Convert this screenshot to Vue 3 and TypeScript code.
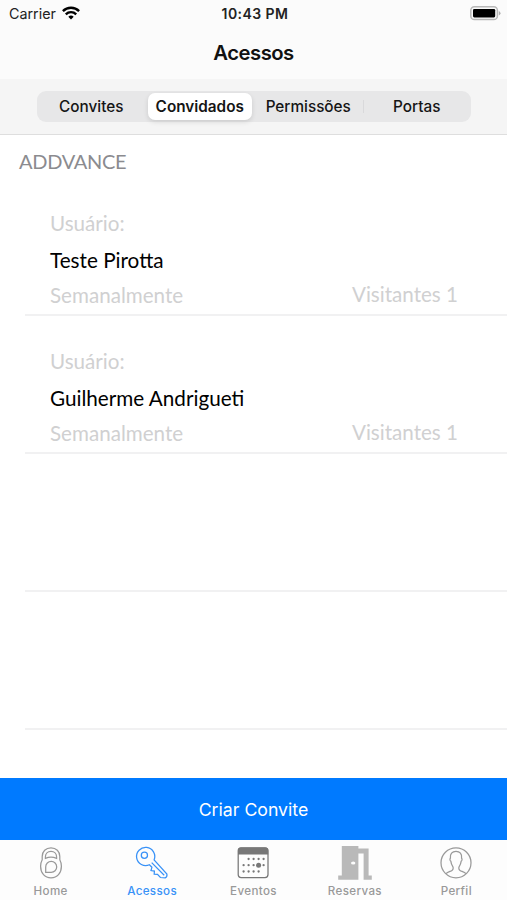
<script setup lang="ts">
import { ref } from 'vue'

interface Guest {
  name: string
  frequency: string
  visitors: number
}

const segments: string[] = ['Convites', 'Convidados', 'Permissões', 'Portas']
const activeSegment = ref(1)
const guests: Guest[] = [
  { name: 'Teste Pirotta', frequency: 'Semanalmente', visitors: 1 },
  { name: 'Guilherme Andrigueti', frequency: 'Semanalmente', visitors: 1 },
]
const tabs: string[] = ['Home', 'Acessos', 'Eventos', 'Reservas', 'Perfil']
const activeTab = ref('Acessos')
const calendarDots: number[][] = [
  [13, 11.5], [18, 11.5], [23, 11.5], [28, 11.5],
  [8, 17.7], [13, 17.7], [18, 17.7], [28, 17.7],
  [8, 24], [13, 24], [18, 24], [23, 24],
]
</script>

<template>
  <div class="screen">
    <header class="nav">
      <div class="status">
        <div class="carrier">
          <span>Carrier</span>
          <svg width="18" height="14" viewBox="0 0 18 14" fill="none" stroke="#000" stroke-width="2.4">
            <path d="M0.9 5.1a11.6 11.6 0 0 1 16.2 0" />
            <path d="M3.8 8.3a7.4 7.4 0 0 1 10.4 0" />
            <path d="M6.3 10.7a3.9 3.9 0 0 1 5.4 0L9 13.4z" fill="#000" stroke="none" />
          </svg>
        </div>
        <span class="clock">10:43 PM</span>
        <svg class="battery" width="31" height="15" viewBox="0 0 31 15">
          <rect x="0.8" y="0.8" width="26.6" height="12.8" rx="3.6" fill="#fafafa" stroke="#b8b8b8" stroke-width="1.5" />
          <rect x="3" y="3" width="22.2" height="8.4" rx="1.3" fill="#000" />
          <path d="M28.8 5v4.6q1.7-.8 1.7-2.3T28.8 5z" fill="#b0b0b0" />
        </svg>
      </div>
      <h1>Acessos</h1>
    </header>
    <div class="filter">
      <div class="segmented">
        <button
          v-for="(label, i) in segments"
          :key="label"
          :class="['segment', { active: i === activeSegment, divided: i === 3 }]"
          @click="activeSegment = i"
        ><span>{{ label }}</span></button>
      </div>
    </div>
    <main>
      <h2>ADDVANCE</h2>
      <ul>
        <li v-for="guest in guests" :key="guest.name">
          <span class="muted">Usuário:</span>
          <span class="name">{{ guest.name }}</span>
          <div class="meta muted">
            <span class="frequency">{{ guest.frequency }}</span>
            <span class="visitors">Visitantes {{ guest.visitors }}</span>
          </div>
        </li>
        <li></li>
        <li></li>
      </ul>
    </main>
    <button class="create">Criar Convite</button>
    <nav class="tabs">
      <button v-for="tab in tabs" :key="tab" :class="['tab', { current: tab === activeTab }]" @click="activeTab = tab">
        <svg width="36" height="36" viewBox="0 0 36 36" fill="none" stroke="currentColor" stroke-width="1.25">
          <g v-if="tab === 'Home'">
            <path d="M18 2.8c-5.2 0-8.8 3.8-8.8 8.7v3.2c-1 1.9-1.6 4-1.6 6.5 0 7 4.2 11.6 10.4 11.6s10.4-4.6 10.4-11.6c0-2.5-.6-4.6-1.6-6.5v-3.2c0-4.9-3.6-8.7-8.8-8.7z" />
            <path d="M12.4 13.4v-1.5c0-3.3 2.3-5.6 5.6-5.6s5.6 2.3 5.6 5.6v1.5q-5.6-2.4-11.2 0z" />
            <path d="M12.7 27.4v-5.5a5.5 5.5 0 1 1 5.5 5.5z" />
          </g>
          <g v-else-if="tab === 'Acessos'">
            <path d="M20.1 14.9a9.1 9.1 0 1 0-4.7 4.9l2.5 2.5-.9 3.2 3.4.6-.2 3 3.3.3 2.9 3.1 4.8.3q2.2-.9 1.7-3.7z" />
            <circle cx="10.4" cy="10.2" r="3.1" />
            <path d="M17.7 17.6l12.5 12.6" />
          </g>
          <g v-else-if="tab === 'Eventos'" class="calendar">
            <rect x="3.2" y="2.8" width="29.8" height="29.8" rx="3" />
            <path d="M3 9.6V5.4q0-2.8 2.8-2.8h24.6q2.8 0 2.8 2.8v4.2z" fill="currentColor" stroke="none" />
            <g fill="currentColor" stroke="none" transform="translate(.6 2.5)">
              <circle v-for="(dot, i) in calendarDots" :key="i" :cx="dot[0]" :cy="dot[1]" r="1.15" />
              <circle cx="23" cy="17.7" r="2.5" />
            </g>
          </g>
          <g v-else-if="tab === 'Reservas'" class="door">
            <path fill-rule="evenodd" d="M4.8 1h16.6v2.6h10.2v27h3.2v4.1h-8.2V8.4h-5.2v26.3H1.2v-4.1h3.6zM18.4 18.1a2.2 1.5 0 1 0-4.4 0 2.2 1.5 0 1 0 4.4 0z" />
          </g>
          <g v-else>
            <circle cx="18" cy="17.8" r="15" />
            <path d="M8 28.7c1.7-1.9 4.5-2.3 6-3.3 1.8-1.2 1.3-3.4.3-4.8-.9-1.2-1.1-2.7-1.4-4.3-1.1-.5-1.2-2.6-.5-3.1-.5-4.3 1.7-6.8 5.6-6.8s6.1 2.5 5.6 6.8c.7.5.6 2.6-.5 3.1-.3 1.6-.5 3.1-1.4 4.3-1 1.4-1.5 3.6.3 4.8 1.5 1 4.3 1.4 6 3.3" />
          </g>
        </svg>
        <span>{{ tab }}</span>
      </button>
    </nav>
  </div>
</template>

<style>
body {
  margin: 0;
}
</style>

<style scoped>
.screen {
  display: flex;
  flex-direction: column;
  height: 900px;
  overflow: hidden;
  background: #fff;
  color: #000;
  font-family: Inter, "Liberation Sans", sans-serif;
}
button {
  border: 0;
  padding: 0;
  margin: 0;
  background: none;
  color: inherit;
  font: inherit;
}
h1, h2, ul {
  margin: 0;
  padding: 0;
  list-style: none;
}
.nav {
  height: 79px;
  background: #fbfbfb;
}
.status {
  display: grid;
  grid-template-columns: 1fr auto 1fr;
  align-items: center;
  height: 27px;
  padding: 0 6px 0 9px;
  font-size: 14.3px;
  color: #222;
}
.carrier {
  display: flex;
  align-items: center;
  gap: 6px;
}
.carrier svg {
  margin-top: -2px;
}
.clock {
  font-size: 14px;
  font-weight: 600;
  letter-spacing: .45px;
}
.battery {
  justify-self: end;
}
h1 {
  line-height: 52px;
  text-align: center;
  font-size: 20.3px;
  font-weight: 600;
  letter-spacing: -.5px;
  color: #111;
}
.filter {
  box-sizing: border-box;
  height: 56px;
  padding: 12px 36px 0 37px;
  background: #f5f5f5;
  border-bottom: 1px solid #dedede;
}
.segmented {
  display: grid;
  grid-template-columns: repeat(4, 1fr);
  box-sizing: border-box;
  height: 31px;
  padding: 2px 0;
  border-radius: 9px;
  background: #e7e7e8;
}
.segment {
  font-size: 15.3px;
  font-weight: 500;
  color: #151515;
  border-radius: 7px;
}
.active {
  margin: 0 2px;
  background: #fff;
  font-weight: 600;
  box-shadow: 0 2px 5px rgba(0, 0, 0, .12);
}
.divided {
  border-radius: 0;
  background: linear-gradient(#d9d9db, #d9d9db) 0 center / 1px 13px no-repeat;
}
main {
  flex: 1;
  font-family: Lato, sans-serif;
}
h2 {
  height: 43px;
  padding: 14px 19px 0;
  box-sizing: border-box;
  line-height: 25px;
  font-size: 20px;
  font-weight: 400;
  letter-spacing: -.3px;
  color: #8b8b8f;
}
li {
  display: flex;
  flex-direction: column;
  box-sizing: border-box;
  height: 138px;
  margin-left: 25px;
  padding: 32px 49px 0 25px;
  border-bottom: 2px solid #f1f1f2;
  font-size: 20.6px;
  line-height: 26px;
}
.muted {
  color: #d0d0d1;
}
.name {
  margin-top: 11px;
  font-size: 20.7px;
}
.meta {
  display: flex;
  justify-content: space-between;
  margin-top: 9px;
}
.visitors {
  margin-top: -1px;
}
.create {
  height: 62px;
  background: #007aff;
  color: #fff;
  font-size: 17.7px;
}
.tabs {
  display: grid;
  grid-template-columns: repeat(5, 1fr);
  height: 60px;
  background: #fdfdfd;
}
.tab {
  display: flex;
  flex-direction: column;
  align-items: center;
  padding-top: 5px;
  color: #999;
  font-size: 11.6px;
  font-weight: 500;
  line-height: 20px;
  letter-spacing: .35px;
}
.current {
  color: #3992f7;
}
.calendar {
  color: #777;
}
.door path {
  fill: #b9b9b9;
  stroke: none;
}
</style>
